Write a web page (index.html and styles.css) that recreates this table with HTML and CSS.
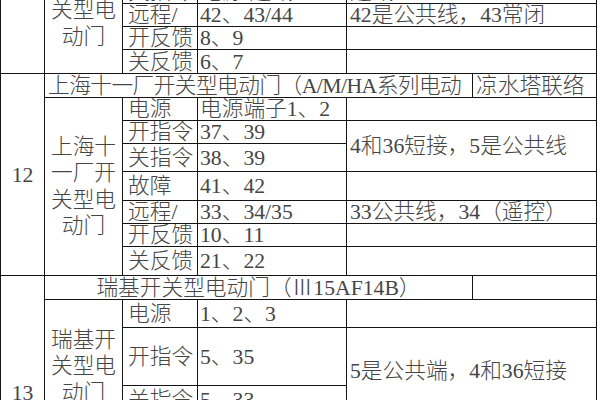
FILE: index.html
```
<!DOCTYPE html>
<html lang="zh">
<head>
<meta charset="utf-8">
<title>开关型电动门接线表</title>
<link rel="stylesheet" href="styles.css">
</head>
<body>
<div class="page">
<table class="sheet">
<colgroup><col class="c1"><col class="c2"><col class="c3"><col class="c4"><col class="c5a"><col class="c5b"></colgroup>
<tbody>
<tr class="h24"><td rowspan="4" class="num"></td><td rowspan="4" class="name name-top">关型电动门</td><td class="sig">关指令</td><td class="pin">电源/通讯</td><td colspan="2" class="note">通讯</td></tr>
<tr class="h22"><td class="sig">远程/</td><td class="pin">42、43/44</td><td colspan="2" class="note">42是公共线，43常闭</td></tr>
<tr class="h23"><td class="sig">开反馈</td><td class="pin">8、9</td><td colspan="2" class="note"></td></tr>
<tr class="h24"><td class="sig">关反馈</td><td class="pin">6、7</td><td colspan="2" class="note"></td></tr>

<tr class="h24"><td rowspan="8" class="num">12</td><td colspan="4" class="head head-left head-tight">上海十一厂开关型电动门（A/M/HA系列电动</td><td class="head head-left">凉水塔联络</td></tr>
<tr class="h22"><td rowspan="7" class="name">上海十一厂开关型电动门</td><td class="sig">电源</td><td class="pin">电源端子1、2</td><td colspan="2" class="note"></td></tr>
<tr class="h23"><td class="sig">开指令</td><td class="pin">37、39</td><td colspan="2" rowspan="2" class="note">4和36短接，5是公共线</td></tr>
<tr class="h28"><td class="sig">关指令</td><td class="pin">38、39</td></tr>
<tr class="h29"><td class="sig">故障</td><td class="pin">41、42</td><td colspan="2" class="note"></td></tr>
<tr class="h23"><td class="sig">远程/</td><td class="pin">33、34/35</td><td colspan="2" class="note">33公共线，34（遥控）</td></tr>
<tr class="h22"><td class="sig">开反馈</td><td class="pin">10、11</td><td colspan="2" class="note"></td></tr>
<tr class="h29"><td class="sig">关反馈</td><td class="pin">21、22</td><td colspan="2" class="note"></td></tr>

<tr class="h24"><td rowspan="8" class="num">13</td><td colspan="4" class="head">瑞基开关型电动门（Ⅲ15AF14B）</td><td class="head"></td></tr>
<tr class="h28"><td rowspan="4" class="name name-13">瑞基开关型电动门</td><td class="sig">电源</td><td class="pin">1、2、3</td><td colspan="2" class="note"></td></tr>
<tr class="h58"><td class="sig">开指令</td><td class="pin">5、35</td><td colspan="2" rowspan="2" class="note">5是公共端，4和36短接</td></tr>
<tr class="h28"><td class="sig">关指令</td><td class="pin">5、33</td></tr>
<tr class="h28"><td class="sig">故障</td><td class="pin">41、42</td><td colspan="2" class="note"></td></tr>
<tr class="h23"><td class="sig">远程/</td><td class="pin">33、34</td><td colspan="2" class="note"></td></tr>
<tr class="h23"><td class="sig">开反馈</td><td class="pin">8、9</td><td colspan="2" class="note"></td></tr>
<tr class="h22"><td class="sig">关反馈</td><td class="pin">6、7</td><td colspan="2" class="note"></td></tr>
</tbody>
</table>
</div>
</body>
</html>
```
FILE: styles.css
```
html, body {
  margin: 0;
  padding: 0;
  background: #ffffff;
}
.page {
  width: 600px;
  height: 400px;
  overflow: hidden;
}
.sheet {
  margin-top: -21px;
  border-collapse: collapse;
  table-layout: fixed;
  width: 597px;
  font-family: "Liberation Serif", "Noto Sans CJK SC", serif;
  font-size: 21.7px;
  font-weight: 300;
  color: #454545;
}
.c1 { width: 44px; }
.c2 { width: 78px; }
.c3 { width: 75px; }
.c4 { width: 149px; }
.c5a { width: 126px; }
.c5b { width: 124px; }
.sheet td {
  border: 1px solid #141414;
  padding: 0;
  line-height: 22px;
  vertical-align: middle;
  white-space: nowrap;
  overflow: hidden;
}
.h22 { height: 22px; }
.h23 { height: 23px; }
.h24 { height: 24px; }
.h28 { height: 28px; }
.h29 { height: 29px; }
.h58 { height: 58px; }
.num {
  text-align: center;
}
.name {
  text-align: center;
  white-space: normal !important;
  line-height: 26.5px !important;
  padding: 0 5px !important;
}
.name-top {
  padding-bottom: 6px !important;
}
.name-13 {
  padding-bottom: 8px !important;
}
.sig {
  padding-left: 5px !important;
}
.pin {
  padding-left: 2px !important;
}
.note {
  padding-left: 3px !important;
}
.head {
  text-align: center;
}
.head-left {
  text-align: left;
  padding-left: 3px !important;
}
.head-tight {
  letter-spacing: -0.55px;
}
```
